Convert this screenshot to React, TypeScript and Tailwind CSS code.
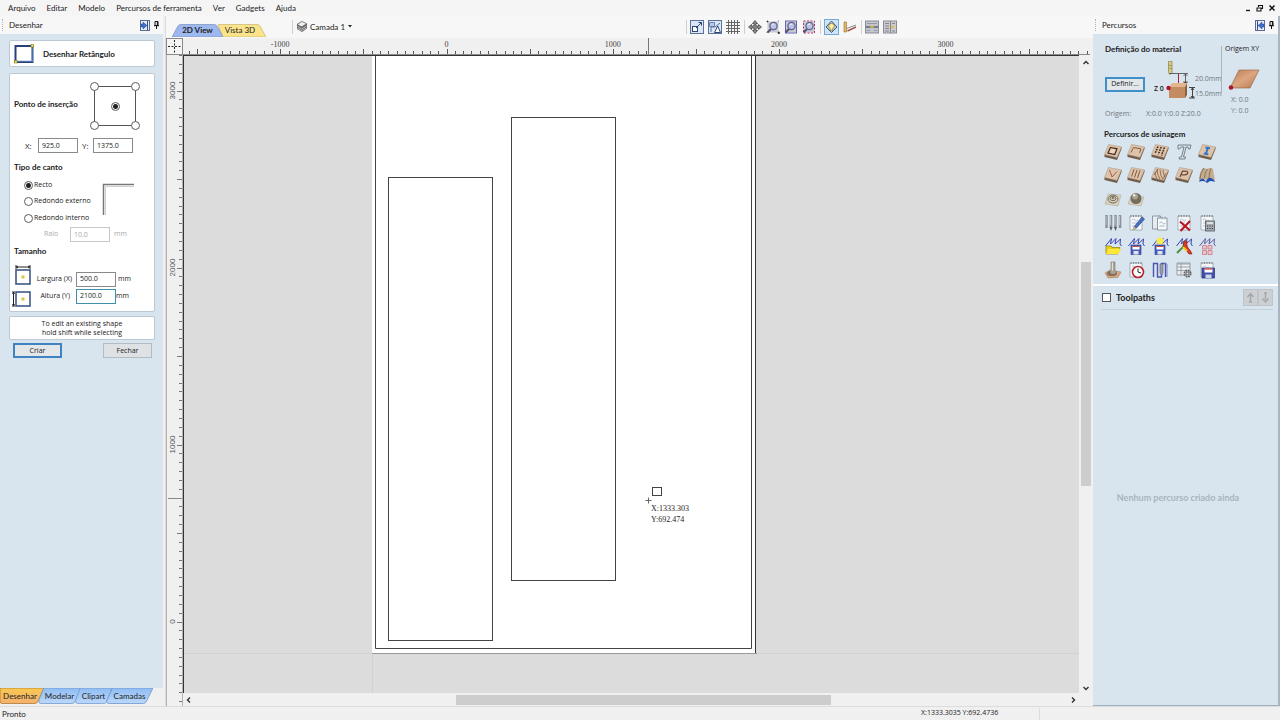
import type { ReactNode } from "react";

const menus = ["Arquivo", "Editar", "Modelo", "Percursos de ferramenta", "Ver", "Gadgets", "Ajuda"];

/* ---------- small controls ---------- */

const Radio = ({ name, label, checked }: { name: string; label: string; checked?: boolean }) => (
  <input
    type="radio"
    name={name}
    aria-label={label}
    defaultChecked={checked}
    className="block size-[9px] shrink-0 appearance-none rounded-full border border-[#5c5c5c] bg-white checked:bg-[radial-gradient(circle,#222_0_2px,#fff_3px)]"
  />
);

const Field = ({ id, value, className = "" }: { id: string; value: string; className?: string }) => (
  <input
    id={id}
    type="text"
    defaultValue={value}
    className={`h-[15px] w-10 border bg-white px-[3px] pb-px font-['Open_Sans',sans-serif] text-[7px] leading-none outline-none ${className}`}
  />
);

const DockIcon = ({ flip }: { flip?: boolean }) => (
  <svg width="10" height="11" viewBox="0 0 10 11" className={flip ? "-scale-x-100" : ""}>
    <rect x=".5" y=".5" width="9" height="10" fill="#e8eef8" stroke="#5a6a94" />
    <path d="M7.5 1v9" stroke="#3b4f86" />
    <path d="M1 4h2V2l4 3.5L3 9V7H1z" fill="#3d6fd0" stroke="#27488e" strokeWidth=".5" />
  </svg>
);

const PinIcon = () => (
  <svg width="5" height="8" viewBox="0 0 5 8">
    <path d="M1 .5h3v4H1zM0 4.7h5M2.5 5v3M3.4 1v3.4" fill="none" stroke="#111" />
  </svg>
);

const PanelHeader = ({ title, flip }: { title: string; flip?: boolean }) => (
  <header className="flex h-[18px] shrink-0 items-center gap-1 bg-[#f7f7f7] pr-1 pl-0.5">
    <span className="h-3 w-px border-l border-dotted border-[#b5b5b5]" />
    <h2 className="flex-1 pl-0.5 text-[8px]">{title}</h2>
    <button aria-label="Mover painel"><DockIcon flip={flip} /></button>
    <button aria-label="Fixar painel"><PinIcon /></button>
  </header>
);

/* ---------- left panel ---------- */

const SizeIcon = ({ vertical }: { vertical?: boolean }) => (
  <svg width="20" height="22" viewBox="0 0 20 22" className="-ml-0.5 shrink-0">
    <rect x="4" y="5" width="14" height="14" fill="#fff" stroke="#3d5a86" strokeWidth="1.6" />
    <rect x="9.500" y="10.500" width="3" height="3" fill="#d8c83c" />
    {vertical ? (
      <path d="M1.5 5v14M0 5h3M0 19h3M.5 7l1-1.5 1 1.5M.5 17l1 1.5 1-1.5" fill="none" stroke="#222" />
    ) : (
      <path d="M4 2h14M4 0v4M18 0v4M6 1L4.500 2 6 3M16 1l1.500 1L16 3" fill="none" stroke="#222" />
    )}
  </svg>
);

const bottomTabs = [
  { label: "Desenhar", width: "w-[44px]", active: true },
  { label: "Modelar", width: "w-[43px]" },
  { label: "Clipart", width: "w-[37px]" },
  { label: "Camadas", width: "w-[47px]" },
];

const LeftPanel = () => (
  <aside className="flex w-[163px] shrink-0 flex-col bg-[#d8e4ee]">
    <PanelHeader title="Desenhar" />
    <div className="flex min-h-0 flex-1 flex-col pt-1.5 pr-2 pl-[9px]">
      <div className="flex h-[27px] shrink-0 items-center gap-[9px] rounded-xs border border-[#bcc8d2] bg-white pl-1">
        <svg width="20" height="20" viewBox="0 0 20 20">
          <rect x="1.500" y="2" width="17" height="16" fill="#fff" stroke="#25427c" strokeWidth="2" />
          <path d="M3 17h16V3" fill="none" stroke="#8fb0df" strokeWidth=".8" />
          <rect x="17" y=".5" width="2.500" height="2.500" fill="#ffe34a" stroke="#8a7a10" strokeWidth=".6" />
          <rect x=".5" y="16.500" width="2.500" height="2.500" fill="#ffe34a" stroke="#8a7a10" strokeWidth=".6" />
        </svg>
        <h3 className="text-[8px] font-bold">Desenhar Retângulo</h3>
      </div>

      <div className="mt-1.5 h-[239px] shrink-0 rounded-xs border border-[#bcc8d2] bg-white pl-1 font-['Open_Sans',sans-serif] text-[7px]">
        <fieldset className="flex h-16 items-center">
          <span className="w-[76px] pb-1 font-['Lato',sans-serif] text-[8px] font-bold">Ponto de inserção</span>
          <div className="relative grid h-[48px] w-[50px] grid-cols-2 content-between justify-between">
            <span className="absolute inset-1 border border-[#555]" />
            <div className="relative"><Radio name="ancora" label="Superior esquerdo" /></div>
            <div className="relative justify-self-end"><Radio name="ancora" label="Superior direito" /></div>
            <div className="relative col-span-2 justify-self-center"><Radio name="ancora" label="Centro" checked /></div>
            <div className="relative"><Radio name="ancora" label="Inferior esquerdo" /></div>
            <div className="relative justify-self-end"><Radio name="ancora" label="Inferior direito" /></div>
          </div>
        </fieldset>
        <div className="flex items-center pl-[11px]">
          <label htmlFor="px" className="w-[13px] text-[8px]">X:</label>
          <Field id="px" value="925.0" className="border-[#8a8a8a]" />
          <label htmlFor="py" className="w-[15px] pl-1 text-[8px]">Y:</label>
          <Field id="py" value="1375.0" className="border-[#8a8a8a]" />
        </div>

        <h3 className="mt-2 font-['Lato',sans-serif] text-[8px] leading-[12px] font-bold">Tipo de canto</h3>
        <div className="mt-1 flex h-[49px] pl-[10px]">
          <div className="flex w-[78px] flex-col justify-between">
            <label className="flex h-4 items-center gap-px whitespace-nowrap"><Radio name="canto" label="Recto" checked />Recto</label>
            <label className="flex h-4 items-center gap-px whitespace-nowrap"><Radio name="canto" label="Redondo externo" />Redondo externo</label>
            <label className="flex h-4 items-center gap-px whitespace-nowrap"><Radio name="canto" label="Redondo interno" />Redondo interno</label>
          </div>
          <svg width="32" height="38" viewBox="0 0 32 38">
            <path d="M1.500 38V7.500H32" fill="none" stroke="#777" strokeWidth="1.500" />
            <path d="M3.500 38V9.500H32" fill="none" stroke="#d0d0d0" />
          </svg>
        </div>
        <div className="flex items-center pt-px pl-[30px] text-[#a9a9a9]">
          <label htmlFor="raio" className="w-[26px]">Raio</label>
          <Field id="raio" value="10.0" className="border-[#c8c8c8]" />
          <span className="pl-1">mm</span>
        </div>

        <h3 className="mt-[3px] font-['Lato',sans-serif] text-[8px] leading-[12px] font-bold">Tamanho</h3>
        <div className="mt-2 flex h-[22px] items-center">
          <SizeIcon />
          <label htmlFor="largura" className="w-[44px] pt-1.5 pr-1 text-right whitespace-nowrap">Largura (X)</label>
          <Field id="largura" value="500.0" className="mt-1.5 border-[#8a8a8a]" />
          <span className="pt-1.5 pl-0.5">mm</span>
        </div>
        <div className="flex h-[22px] items-center">
          <SizeIcon vertical />
          <label htmlFor="altura" className="w-[44px] pr-1.5 pb-1 text-right whitespace-nowrap">Altura (Y)</label>
          <Field id="altura" value="2100.0" className="mb-1 border-[#3f8fa8]" />
          <span className="pb-1">mm</span>
        </div>
      </div>

      <p className="mt-1 flex h-6 shrink-0 items-center justify-center rounded-xs border border-[#bcc8d2] bg-white text-center font-['Open_Sans',sans-serif] text-[7px] leading-[9px]">
        To edit an existing shape
        <br />
        hold shift while selecting
      </p>
      <div className="mt-[3px] flex justify-between pr-[3px] pl-1 font-['Open_Sans',sans-serif] text-[7px]">
        <button className="h-[15px] w-[49px] border-2 border-[#3f83c2] bg-[#e3e7ea] leading-[10px]">Criar</button>
        <button className="h-[15px] w-[49px] border border-[#b4bcc2] bg-[#dfe2e5] leading-[10px]">Fechar</button>
      </div>
    </div>

    <nav className="flex h-[18px] shrink-0 bg-[#f0f0f0]">
      {bottomTabs.map((t) => (
        <button key={t.label} className={`relative -mr-[6px] h-4 shrink-0 text-[8px] ${t.width}`}>
          <svg viewBox="0 0 44 16" preserveAspectRatio="none" className="absolute inset-0 size-full">
            <defs>
              <linearGradient id={`g-${t.label}`} x1="0" y1="0" x2="0" y2="1">
                <stop offset="0" stopColor={t.active ? "#f8c850" : "#8fbcf4"} />
                <stop offset="1" stopColor={t.active ? "#f5b070" : "#bcd8fa"} />
              </linearGradient>
            </defs>
            <path
              d={t.active ? "M0 0H44L38 13Q37 15.500 35 15.500H2Q0 15.500 0 13Z" : "M6 0H44L38 13Q37 15.500 35 15.500H3Q0 15.500 1 12Z"}
              fill={`url(#g-${t.label})`}
              stroke={t.active ? "#b07a30" : "#6f98cf"}
              strokeWidth=".8"
            />
          </svg>
          <span className={`relative block text-center leading-4 ${t.active ? "pr-1" : ""}`}>{t.label}</span>
        </button>
      ))}
    </nav>
  </aside>
);

/* ---------- view toolbar ---------- */

const Magnifier = ({ children }: { children?: ReactNode }) => (
  <svg width="14" height="14" viewBox="0 0 14 14">
    <rect x="1.500" y="1.500" width="11" height="11" fill="#c9c9cf" />
    {children}
    <path d="M5 9L1.500 12.500" stroke="#55507c" strokeWidth="2.200" />
    <circle cx="7.500" cy="6" r="3.600" fill="#bcc3e4" stroke="#5d5f8c" strokeWidth="1.200" />
    <path d="M5.800 5.200a2 2 0 0 1 2-1.200" fill="none" stroke="#fff" />
  </svg>
);

const Separator = ({ className = "" }: { className?: string }) => (
  <span className={`h-3.5 w-px shrink-0 bg-[#cfcfcf] ${className}`} />
);

const ViewToolbar = () => (
  <div className="flex items-center gap-1">
    <Separator className="-mr-px" />
    <button aria-label="Ajustar à janela">
      <svg width="14" height="14" viewBox="0 0 14 14">
        <rect x=".5" y=".5" width="13" height="13" fill="#d9e6f7" stroke="#5c7299" />
        <rect x="2.500" y="6.500" width="5" height="5" fill="#fff" stroke="#2d4674" />
        <path d="M6 8l5.500-5.500M8.500 2.500h3v3" fill="none" stroke="#2d4674" />
      </svg>
    </button>
    <button aria-label="Encaixar objetos">
      <svg width="14" height="14" viewBox="0 0 14 14">
        <rect x=".5" y=".5" width="13" height="13" fill="#dce8f8" stroke="#5c7299" />
        <path d="M1.500 2.500h5v4h-5z" fill="#b4cbec" stroke="#55709c" strokeWidth=".8" />
        <path d="M7 7H3v5M7 7l5-4" fill="none" stroke="#55709c" />
        <path d="M6.500 12.500h6L9.700 6z" fill="#fff" stroke="#2d4674" />
      </svg>
    </button>
    <button aria-label="Grade">
      <svg width="14" height="14" viewBox="0 0 14 14">
        <path d="M2.500 0v14M5.500 0v14M8.500 0v14M11.500 0v14M0 2.500h14M0 5.500h14M0 8.500h14M0 11.500h14" stroke="#666" />
      </svg>
    </button>
    <Separator className="-mr-px" />
    <button aria-label="Mover vista">
      <svg width="14" height="14" viewBox="0 0 14 14">
        <path d="M7 .5L9.500 3.500H8V6h2.500V4.500L13.500 7l-3 2.500V8H8v2.500h1.500L7 13.500 4.500 10.500H6V8H3.500v1.500L.5 7l3-2.500V6H6V3.500H4.500z" fill="#8c8c8c" stroke="#333" strokeWidth=".7" />
      </svg>
    </button>
    <button aria-label="Zoom janela">
      <Magnifier>
        <path d="M1 1h1v1H1zM12 12h1.500v1.500H12zM12 1h1M1 12v1" fill="#333" stroke="#333" strokeWidth=".7" />
      </Magnifier>
    </button>
    <button aria-label="Zoom material">
      <Magnifier><rect x="1.500" y="1" width="11" height="12" fill="none" stroke="#6466b4" /></Magnifier>
    </button>
    <button aria-label="Zoom seleção">
      <Magnifier><rect x="1.500" y="1" width="11" height="12" fill="none" stroke="#b0306c" strokeDasharray="2 1.500" /></Magnifier>
    </button>
    <Separator className="-mr-px" />
    <button aria-label="Mostrar vetores" className="border border-[#74a9d8] bg-[#cfe4f7]">
      <svg width="13" height="14" viewBox="0 0 13 14">
        <path d="M6.500 1L12 7l-5.500 5.500L1 7z" fill="#b9cbe4" stroke="#3c5c8c" />
        <path d="M6.500 3.500a2.600 2.600 0 0 1 1.200 5v2H5.300v-2a2.600 2.600 0 0 1 1.200-5z" fill="#ffef9c" stroke="#8a7b28" strokeWidth=".8" />
      </svg>
    </button>
    <button aria-label="Medir">
      <svg width="14" height="14" viewBox="0 0 14 14">
        <path d="M1 2h2.500v10H1z" fill="#e2b866" stroke="#94702c" strokeWidth=".6" />
        <path d="M4.500 11L13 7" stroke="#a05a52" strokeWidth="1.500" />
        <path d="M3.500 8.500L13 5" stroke="#8b8b8b" />
      </svg>
    </button>
    <Separator className="-mr-px" />
    <button aria-label="Dividir horizontal">
      <svg width="14" height="14" viewBox="0 0 14 14">
        <rect x=".5" y="1" width="13" height="12" fill="#c4c6cf" stroke="#8a8c98" />
        <path d="M1 7h12" stroke="#61636e" strokeWidth="1.500" />
        <path d="M2 3.500h10M2 10.500h3M9 10.500h3" stroke="#9698a4" />
        <path d="M7 5l2.500 2.500h-5z" fill="#d9c04c" />
      </svg>
    </button>
    <button aria-label="Dividir vertical">
      <svg width="14" height="14" viewBox="0 0 14 14">
        <rect x=".5" y="1" width="13" height="12" fill="#cbcbd0" stroke="#8a8c98" />
        <path d="M7.500 1v12M2 3.500h4M2 6h4M2 8.500h4M2 11h4M9 3.500h3M9 11h3" stroke="#85878f" />
        <path d="M12 7L8.500 5v4z" fill="#d9c04c" />
      </svg>
    </button>
  </div>
);

const ViewTabs = () => (
  <div className="flex items-end self-stretch pl-[6px]">
    <button className="relative z-10 h-[13px] w-[51px] text-[8px] font-bold">
      <svg viewBox="0 0 51 13" className="absolute inset-0 size-full">
        <path d="M0 13L6 2Q7 .5 9 .5H42Q44 .5 45 2L51 13Z" fill="#9cb8ee" stroke="#8498c4" strokeWidth=".8" />
      </svg>
      <span className="relative block leading-[13px]">2D View</span>
    </button>
    <button className="relative -ml-[5px] h-[13px] w-[48px] text-[8px]">
      <svg viewBox="0 0 48 13" className="absolute inset-0 size-full">
        <path d="M0 .5H39Q41 .5 42 2L48 13H5Z" fill="#fbe38a" stroke="#cdbb78" strokeWidth=".8" />
      </svg>
      <span className="relative block pr-1 leading-[13px]">Vista 3D</span>
    </button>
  </div>
);

/* ---------- rulers and canvas ---------- */

// pixels per drawing unit on each axis, and the pixel where zero sits
const SX = 0.1663;
const SY = 0.177;
const ZERO_X = 263.5;
const ZERO_Y = 566.5;

const xTicks = Array.from({ length: 121 }, (_, i) => -1600 + i * 50);
const yTicks = Array.from({ length: 76 }, (_, i) => -500 + i * 50);

const TopRuler = () => (
  <svg className="h-[17px] min-w-0 flex-1 border-b border-[#8a8a8a] bg-[#f0f0f0]" width="100%">
    {xTicks.map((v) => {
      const x = Math.round(ZERO_X + v * SX) + 0.5;
      return <path key={v} d={`M${x} 16V${v % 500 === 0 ? 11 : 13}`} stroke="#555" />;
    })}
    {[-1000, 0, 1000, 2000, 3000].map((v) => (
      <text key={v} x={ZERO_X + v * SX} y="9" textAnchor="middle" fontSize="8" fill="#444" className="font-['Liberation_Serif',serif]">
        {v}
      </text>
    ))}
    <path d="M465.500 0V17" stroke="#777" />
  </svg>
);

const SideRuler = () => (
  <svg className="w-[17px] shrink-0 border-x border-[#b4b4b4] bg-[#f0f0f0]" height="100%">
    {yTicks.map((v) => {
      const y = Math.round(ZERO_Y - v * SY) + 0.5;
      return <path key={v} d={`M16 ${y}H${v % 500 === 0 ? 10 : 12}`} stroke="#777" />;
    })}
    {[0, 1000, 2000, 3000].map((v) => (
      <text
        key={v}
        transform={`translate(8 ${ZERO_Y - v * SY}) rotate(-90)`}
        textAnchor="middle"
        fontSize="8"
        fill="#555"
        className="font-['Liberation_Sans',sans-serif]"
      >
        {v}
      </text>
    ))}
    <path d="M1 443.500H16" stroke="#888" />
  </svg>
);

const Canvas = () => (
  <svg className="min-h-0 min-w-0 flex-1 border-t border-l border-[#333] bg-[#dcdcdc]" width="100%" height="100%">
    <path d="M0 597.500H4000M188.500 597V4000" stroke="#d2d2d2" />
    <rect x="188" y="-10" width="384" height="607" fill="#fff" />
    <path d="M188 597.500H573" stroke="#999" />
    <path d="M571.500 0V597" stroke="#333" />
    <path d="M191.500 0V592.500H567.500V0" fill="none" stroke="#444" />
    <rect x="204.500" y="121.500" width="104" height="463" fill="none" stroke="#444" />
    <rect x="327.500" y="61.500" width="104" height="463" fill="none" stroke="#444" />
    <rect x="468.500" y="431.500" width="9" height="8" fill="none" stroke="#444" />
    <path d="M461.500 444.500h6M464.500 441.500v6" stroke="#666" />
    <g fontSize="8" fill="#222" className="font-['Liberation_Serif',serif]">
      <text x="467" y="455">X:1333.303</text>
      <text x="467" y="466">Y:692.474</text>
    </g>
  </svg>
);

const Arrow = ({ d, label }: { d: string; label: string }) => (
  <button aria-label={label} className="flex size-3 shrink-0 items-center justify-center">
    <svg width="6" height="6" viewBox="0 0 6 6"><path d={d} fill="none" stroke="#333" strokeWidth="1.400" /></svg>
  </button>
);

const DrawingArea = () => (
  <main className="flex min-w-0 flex-1 flex-col border-l border-[#dcdcdc]">
    <div className="flex h-[22px] shrink-0 items-center bg-[#f7f7f7] pb-px">
      <ViewTabs />
      <Separator className="ml-[26px]" />
      <button className="flex w-[60px] items-center gap-[3px] pl-1 text-[8px] whitespace-nowrap">
        <svg width="10" height="11" viewBox="0 0 10 11" className="shrink-0">
          <path d="M5 0l5 2.500v5L5 11 0 8V3z" fill="#666" />
          <path d="M5 .8l4 2L4.600 5.600.8 3.400z" fill="#efefef" />
          <path d="M.5 5.500l4.200 2.400L9.500 5M.5 7.300l4.200 2.300L9.500 7" fill="none" stroke="#ddd" strokeWidth=".7" />
        </svg>
        <span>Camada 1</span>
        <svg width="4" height="3" viewBox="0 0 4 3" className="shrink-0"><path d="M0 0h4L2 2.500z" fill="#222" /></svg>
      </button>
      <div className="ml-[333px]"><ViewToolbar /></div>
    </div>

    <div className="flex h-[17px] shrink-0 pr-[3px]">
      <div className="w-[17px] shrink-0 border border-[#8a8a8a] bg-[#f5f5f5]">
        <svg width="15" height="15" viewBox="0 0 15 15">
          <path d="M7.500 1v13M1 7.500h13" stroke="#222" strokeDasharray="2 1.500" />
        </svg>
      </div>
      <TopRuler />
    </div>

    <div className="flex min-h-0 flex-1">
      <SideRuler />
      <div className="flex min-w-0 flex-1 flex-col">
        <Canvas />
        <div className="flex h-[13px] shrink-0 items-center bg-[#f0f0f0]">
          <Arrow label="Rolar à esquerda" d="M4 .5L1.500 3 4 5.500" />
          <div className="flex h-2.5 flex-1">
            <span className="flex-[260]" />
            <span className="flex-[375] bg-[#cdcdcd]" />
            <span className="flex-[235]" />
          </div>
          <Arrow label="Rolar à direita" d="M2 .5L4.500 3 2 5.500" />
        </div>
      </div>
      <div className="flex w-[14px] shrink-0 flex-col items-center bg-[#f0f0f0] pt-0.5 pb-3">
        <Arrow label="Rolar para cima" d="M.5 4L3 1.500 5.500 4" />
        <div className="flex w-2.5 flex-1 flex-col">
          <span className="flex-[192]" />
          <span className="flex-[223] bg-[#cdcdcd]" />
          <span className="flex-[195]" />
        </div>
        <Arrow label="Rolar para baixo" d="M.5 2L3 4.500 5.500 2" />
      </div>
    </div>
  </main>
);

/* ---------- toolpath icons, all on an 18 unit square ---------- */

const Plate = ({ children }: { children?: ReactNode }) => (
  <>
    <path d="M.5 11.500v2.500l12.500 3 4.500-11V4z" fill="#6f5c4c" />
    <path d="M4.500 1.500L17.500 4 13 14.500.5 11.500z" fill="#dec3aa" stroke="#a58c76" strokeWidth=".5" />
    {children}
  </>
);

const Sheet = ({ children }: { children?: ReactNode }) => (
  <>
    <path d="M3 2h12v14H3z" fill="#f4f6f8" stroke="#8f98a4" strokeWidth=".7" />
    <path d="M4 1v2M6.500 1v2M9 1v2M11.500 1v2M14 1v2" stroke="#777" strokeWidth=".8" />
    <path d="M5 6q2-2 3 0t3 0M5 9h5M5 12h4" fill="none" stroke="#9fb0c4" strokeWidth=".7" />
    {children}
  </>
);

const BlueLines = ({ color = "#3840b0" }: { color?: string }) => (
  <path d="M1.500 9L7.500 1.500 6.500 7l5.500-5.500L11 7l5.500-5L16 7l1.500 2" fill="none" stroke={color} strokeWidth="1" />
);

const Floppy = () => (
  <>
    <path d="M4 8h10v9.500H4z" fill="#4560c0" stroke="#26367c" strokeWidth=".6" />
    <path d="M5.500 9h7v3.500h-7z" fill="#fff" />
    <path d="M6.500 14h5v3.500h-5z" fill="#e2e2ee" />
    <path d="M5.500 9.500h7" stroke="#d0483c" />
  </>
);

const tools: ({ label: string; art: ReactNode } | null)[] = [
  { label: "Perfil", art: <Plate><path d="M6.500 4.500l6.500 1.300-2.300 5.700-6.700-1.500z" fill="#ecd4bc" stroke="#3d2a1c" strokeWidth="1.200" /></Plate> },
  { label: "Bolsão", art: <Plate><path d="M4 9.500l2.500-5 7.500 1.400-1.500 4" fill="none" stroke="#7b5038" strokeWidth=".9" /></Plate> },
  { label: "Furação", art: <Plate><path d="M7 3.500L4 10.500M10.200 4L7.200 11.500M13.400 4.500L10.500 12.500" stroke="#3d2a1c" strokeWidth="1.600" strokeDasharray="1.600 1" /></Plate> },
  { label: "Texto", art: <path d="M3 2h13l-1 4h-1.500l-.5-2h-2L8.500 14h2l-.5 2H4l.5-2h2L9 4H6L4.500 6H3z" fill="#d9e2ea" stroke="#6e7780" strokeWidth=".9" /> },
  { label: "Incrustação", art: <Plate><path d="M7.500 4.500l4.500.8M5.800 10.500l4.500.9M9.700 5L8 11" stroke="#2878c8" strokeWidth="1.900" /></Plate> },
  { label: "Gravação V", art: <Plate><path d="M5.500 4L8 11l5-5.500" fill="none" stroke="#a0604c" strokeWidth="1" /></Plate> },
  { label: "Canelado", art: <Plate><path d="M7 3.500L4.500 10.500M10 4L7.500 11.500M13 4.500l-2.500 7.500" stroke="#7d5a40" strokeWidth="1" /></Plate> },
  { label: "Textura", art: <Plate><path d="M6 3q0 6 3 10M9 3.500q0 6 3 10M12 4q0 4 2 7M4 6q0 4 2 6.500M3 9l4-6M12 13l3-6" fill="none" stroke="#806040" strokeWidth=".8" /></Plate> },
  { label: "Prisma", art: <Plate><path d="M5 11L7.500 5l4 .3q2 .8 1 2.300T8.500 9l-2-.4" fill="none" stroke="#5d4230" strokeWidth="1.100" /></Plate> },
  { label: "Moldura", art: <><path d="M1 15q0-9 4-13l4 1q3-2 6 0l2 12-4-3-3 5-3-4-3 2z" fill="#c4ae8e" /><path d="M6 2q-4 5-4 11M9.500 3q-3 3-3 9M13 2.500q-2 4-2 10" fill="none" stroke="#75624a" strokeWidth=".8" /><path d="M1 16q2-5 4.500-3 2 1 2.500 3 2-5 4.500-4 2.500 0 4.500 4-3-1-4-1-2 0-4 2-2-2-4-2-2 0-4 1z" fill="#1f4fb8" /></> },
  { label: "Desbaste 3D", art: <><path d="M4 4l13 1-3 11L1 14z" fill="#d8d0bc" stroke="#b0a890" strokeWidth=".5" /><g fill="none" stroke="#75705f"><ellipse cx="9" cy="9" rx="5" ry="4" /><ellipse cx="9" cy="8.500" rx="3" ry="2.200" /><ellipse cx="9" cy="8" rx="1" ry=".7" /></g></> },
  { label: "Acabamento 3D", art: <><path d="M4 6l13 1-3 9L1 14z" fill="#d8d0bc" stroke="#b0a890" strokeWidth=".5" /><circle cx="9" cy="8.500" r="5.500" fill="#746c5c" /><circle cx="8" cy="6.500" r="3" fill="#aaa290" /><circle cx="7.200" cy="5.300" r="1.200" fill="#efeadc" /></> },
  null,
  null,
  null,
  { label: "Banco de ferramentas", art: <><path d="M2.500 1v13M7 1v13M11.500 1v13M16 1v13" stroke="#8b9299" strokeWidth="2.600" /><path d="M2 2v9M6.500 2v9M11 2v9M15.500 2v9" stroke="#c8ced4" strokeWidth=".8" /><path d="M5.500 13L7 17l1.500-4M10 13l1.500 4 1.500-4" fill="#555b61" /></> },
  { label: "Editar percurso", art: <Sheet><path d="M7 13L15 3l2.500 2-8.500 9.500-3 1z" fill="#4873c4" stroke="#23407e" strokeWidth=".7" /><path d="M5.500 16l1.500-3.500 2 2z" fill="#e8c880" /></Sheet> },
  { label: "Duplicar percurso", art: <><path d="M1.500 2h8v13h-8z" fill="#e6ebf0" stroke="#7a8694" strokeWidth=".8" /><path d="M6.500 4H16v12H6.500z" fill="#f6f8fa" stroke="#7a8694" strokeWidth=".8" /><path d="M8 1v4M11 2.500v3M14 2.500v3M8.500 9q2-2 3 0t3 0M8.500 12h5" fill="none" stroke="#9aa5b2" strokeWidth=".8" /></> },
  { label: "Apagar percurso", art: <Sheet><path d="M5 7.500l10 9M15 7l-9.500 10" stroke="#b81420" strokeWidth="2" /></Sheet> },
  { label: "Calcular percursos", art: <Sheet><rect x="7.500" y="7" width="9" height="10" fill="#a5abb1" stroke="#53585e" strokeWidth=".8" /><path d="M9 9h6" stroke="#e8f0e4" strokeWidth="1.600" /><path d="M9 12h6M9 14.500h6" stroke="#3c4046" strokeWidth="1.200" strokeDasharray="1.200 1.200" /></Sheet> },
  { label: "Carregar modelo", art: <><BlueLines /><path d="M2 9h5l1 1.500h8L14 17H2z" fill="#e8d21c" stroke="#8e7f08" strokeWidth=".7" /><path d="M4 12h13l-2.500 5H2z" fill="#fbe838" /></> },
  { label: "Salvar modelo", art: <><BlueLines /><Floppy /></> },
  { label: "Salvar visíveis", art: <><BlueLines /><circle cx="9" cy="4" r="3.500" fill="#f7ec50" /><Floppy /></> },
  { label: "Mesclar percursos", art: <><BlueLines /><path d="M9 4q1 5-3 8l-4 4" fill="none" stroke="#4e9048" strokeWidth="2" /><path d="M9 4q-2 5 2 9l3 4h3l-2-4q-4-3-3-9z" fill="#e03a24" stroke="#7c1810" strokeWidth=".6" /><path d="M8 10l4 4" stroke="#f2d024" strokeWidth="2" /></> },
  { label: "Matriz", art: <><BlueLines color="#5c5ca2" /><path d="M4.500 8.500h4V12h-4zM10 8.500h4V12h-4zM4.500 13.500h4v4h-4zM10 13.500h4v4h-4z" fill="#ecc4ca" stroke="#c87888" strokeWidth=".8" /></> },
  { label: "Simular", art: <><path d="M1 12l5-3 11 2-3 5.500L4 17z" fill="#d6ab88" stroke="#9b7455" strokeWidth=".5" /><ellipse cx="8" cy="12.500" rx="5" ry="2.800" fill="#8d6b52" /><path d="M7 1h4v8q2 2 1 3.500-3 2-6 0Q5.500 10 7 9z" fill="#a9a398" stroke="#6d655a" strokeWidth=".5" /><path d="M8.300 1.500v8" stroke="#f4f0e8" /></> },
  { label: "Tempo estimado", art: <Sheet><circle cx="11" cy="11" r="5.500" fill="#fff" stroke="#b8202c" strokeWidth="1.600" /><path d="M11 7.500V11l3 1" fill="none" stroke="#222" /></Sheet> },
  { label: "Ordenar percursos", art: <><path d="M2.500 16V2.500h4V16h4V2.500h4V16" fill="none" stroke="#4a56b4" strokeWidth="1.400" /><path d="M9 3h3v9L10.500 14 9 12z" fill="#9aa0aa" stroke="#5a6070" strokeWidth=".6" /><path d="M13 3h3v13" fill="none" stroke="#7a86cc" /></> },
  { label: "Configurar lista", art: <><path d="M2 2h13v12H2z" fill="#eceff2" stroke="#868c92" strokeWidth=".8" /><path d="M2 3h13M2 6h13M2 9.500h8M6 2v12" stroke="#8d949b" strokeWidth=".8" /><circle cx="12.500" cy="12.500" r="3.200" fill="#b9bec3" stroke="#5f656b" strokeWidth="1.800" strokeDasharray="1.700 .8" /><circle cx="12.500" cy="12.500" r="1.300" fill="#eceff2" stroke="#5f656b" /></> },
  { label: "Salvar percurso", art: <Sheet><rect x="4" y="7" width="12.500" height="10" fill="#4050a8" stroke="#24307c" strokeWidth=".7" /><path d="M6.500 7.500h8v4h-8z" fill="#fff" /><path d="M6.500 8h8" stroke="#d04038" strokeWidth="1.200" /><path d="M7.500 13.500h6V17h-6z" fill="#cfd6e8" /></Sheet> },
];

/* ---------- right panel ---------- */

const MaterialDiagram = () => (
  <svg width="70" height="44" viewBox="0 0 70 44" className="shrink-0">
    <path d="M14.500 1.500h3.500v11l-2 2-1.500-2z" fill="#d8cf8c" stroke="#8a803e" strokeWidth=".7" />
    <path d="M15 5l3 1M15 8l3 1" stroke="#8a803e" strokeWidth=".7" />
    <path d="M15 13.500h19M31.500 14v9M29.500 22.500h4M29.500 16l2-2 2 2M29.500 21l2 2 2-2" fill="none" stroke="#444" strokeWidth=".8" />
    <path d="M24.500 14v10" stroke="#a82038" />
    <path d="M18 23h15l-2 4H15z" fill="#e4b48c" />
    <path d="M15 27h16v11H15z" fill="#c48a60" />
    <path d="M31 27l2-4v12l-2 3z" fill="#8f5e3c" />
    <path d="M38.500 28v10M35 27.500h6M35 38h6M37 30l1.500-2 1.500 2M37 36l1.500 2 1.500-2" fill="none" stroke="#333" strokeWidth=".9" />
    <circle cx="14.500" cy="28" r="2.200" fill="#a8182c" />
    <g fontSize="7">
      <text x="0" y="31" fontWeight="600" fill="#222">Z 0</text>
      <text x="41" y="21" fill="#6f7880">20.0mm</text>
      <text x="41" y="36" fill="#6f7880">15.0mm</text>
    </g>
  </svg>
);

const RightPanel = () => (
  <aside className="flex w-[187px] shrink-0 flex-col border-r-2 border-[#a9b6c2] bg-[#d8e4ee]">
    <PanelHeader title="Percursos" flip />
    <section className="shrink-0 border-b-2 border-white pb-0.5 pl-2">
      <div className="flex pt-2 font-['Open_Sans',sans-serif]">
        <div className="w-[120px] pl-1">
          <h3 className="font-['Lato',sans-serif] text-[8px] leading-[14px] font-bold">Definição do material</h3>
          <div className="mt-1 flex items-center">
            <button className="mt-1 h-[15px] w-10 shrink-0 border-2 border-[#3f8fc8] bg-[#e3e7ea] text-[7px] leading-[10px]">Definir...</button>
            <span className="w-[9px] shrink-0" />
            <MaterialDiagram />
          </div>
          <p className="mt-1 flex text-[7px] leading-[12px] whitespace-nowrap text-[#6f7880]">
            <span className="w-[41px] shrink-0">Origem:</span>
            <span>X:0.0 Y:0.0 Z:20.0</span>
          </p>
        </div>
        <div className="mt-1 h-[47px] w-px bg-[#aab4bd]" />
        <div className="pl-[3px] text-[7px] leading-[11px] text-[#6f7880]">
          <h3 className="leading-[14px] text-[#222]">Origem XY</h3>
          <svg width="36" height="24" viewBox="0 0 36 24" className="mt-3 block">
            <defs>
              <linearGradient id="board" x1="0" y1="0" x2="1" y2="1">
                <stop offset="0" stopColor="#b87c54" />
                <stop offset=".5" stopColor="#dca681" />
                <stop offset="1" stopColor="#b4754c" />
              </linearGradient>
            </defs>
            <path d="M14 2h20l-9 18H5z" fill="url(#board)" stroke="#94603c" strokeWidth=".6" />
            <circle cx="6" cy="19.500" r="2.300" fill="#a8182c" />
          </svg>
          <p className="pt-0.5 pl-1.5">X: 0.0</p>
          <p className="pl-1.5">Y: 0.0</p>
        </div>
      </div>

      <h3 className="mt-2 pl-[3px] text-[8px] leading-[12px] font-bold">Percursos de usinagem</h3>
      <div className="grid h-[142px] w-[118px] grid-cols-5 grid-rows-6 place-items-center">
        {tools.map((t, i) =>
          t ? (
            <button key={t.label} aria-label={t.label}>
              <svg width="18" height="18" viewBox="0 0 18 18" className="block">{t.art}</svg>
            </button>
          ) : (
            <span key={i} />
          ),
        )}
      </div>
    </section>

    <section className="flex min-h-0 flex-1 flex-col border-b border-[#9db0c0] pr-[5px] pl-2">
      <div className="flex h-6 shrink-0 items-center border-b border-[#c4d0da] pl-px">
        <label className="flex flex-1 items-center gap-[5px] text-[9px] font-bold">
          <input type="checkbox" className="size-[9px] appearance-none border border-[#555] bg-white" />
          Toolpaths
        </label>
        <button aria-label="Subir" className="flex h-[17px] w-[15px] items-center justify-center border border-[#c0c4c8] bg-[#cdd0d3]">
          <svg width="9" height="11" viewBox="0 0 9 11"><path d="M4.500 10V3M1.500 5L4.500 1.500 7.500 5M3 10h3" fill="none" stroke="#a2a7ab" strokeWidth="1.400" /></svg>
        </button>
        <button aria-label="Descer" className="flex h-[17px] w-[15px] items-center justify-center border border-[#c0c4c8] bg-[#cdd0d3]">
          <svg width="9" height="11" viewBox="0 0 9 11"><path d="M4.500 1v7M1.500 6.500L4.500 10l3-3.500M3 1h3" fill="none" stroke="#a2a7ab" strokeWidth="1.400" /></svg>
        </button>
      </div>
      <p className="flex flex-1 items-center justify-center pr-[18px] pb-5 text-[9px] font-bold text-[#aab4bd]">
        Nenhum percurso criado ainda
      </p>
    </section>
  </aside>
);

/* ---------- app ---------- */

const App = () => (
  <div className="flex h-screen flex-col overflow-hidden bg-[#f0f0f0] font-['Lato','Noto_Sans',sans-serif] text-[#222]">
    <div className="flex h-4 shrink-0 items-center justify-between bg-[#f5f5f5] pr-1 pb-px pl-2 text-[8px]">
      <nav className="flex gap-[11px]">
        {menus.map((m) => (
          <button key={m}>{m}</button>
        ))}
      </nav>
      <div className="flex gap-1">
        <button aria-label="Minimizar"><svg width="7" height="8" viewBox="0 0 7 8"><path d="M1 6.500h4" stroke="#111" strokeWidth="1.300" /></svg></button>
        <button aria-label="Restaurar"><svg width="8" height="8" viewBox="0 0 8 8"><path d="M2.500 3V1.500h4v3H5.500M1 4h4v3H1zM1 4h4" fill="none" stroke="#111" strokeWidth="1.100" /></svg></button>
        <button aria-label="Fechar janela"><svg width="8" height="8" viewBox="0 0 8 8"><path d="M1.500 1.500l5 5M6.500 1.500l-5 5" stroke="#111" strokeWidth="1.500" /></svg></button>
      </div>
    </div>

    <div className="flex min-h-0 flex-1">
      <LeftPanel />
      <div className="w-[2px] shrink-0 bg-[#f0f0f0]" />
      <DrawingArea />
      <RightPanel />
    </div>

    <footer className="flex h-3.5 shrink-0 items-center border-t border-[#dcdcdc] text-[8px]">
      <span className="flex-1 pl-0.5">Pronto</span>
      <span className="w-[118px] font-['Open_Sans',sans-serif] text-[7px]">X:1333.3035 Y:692.4736</span>
      <span className="h-3 w-[241px] border-l border-[#dcdcdc]" />
    </footer>
  </div>
);

export default App;
